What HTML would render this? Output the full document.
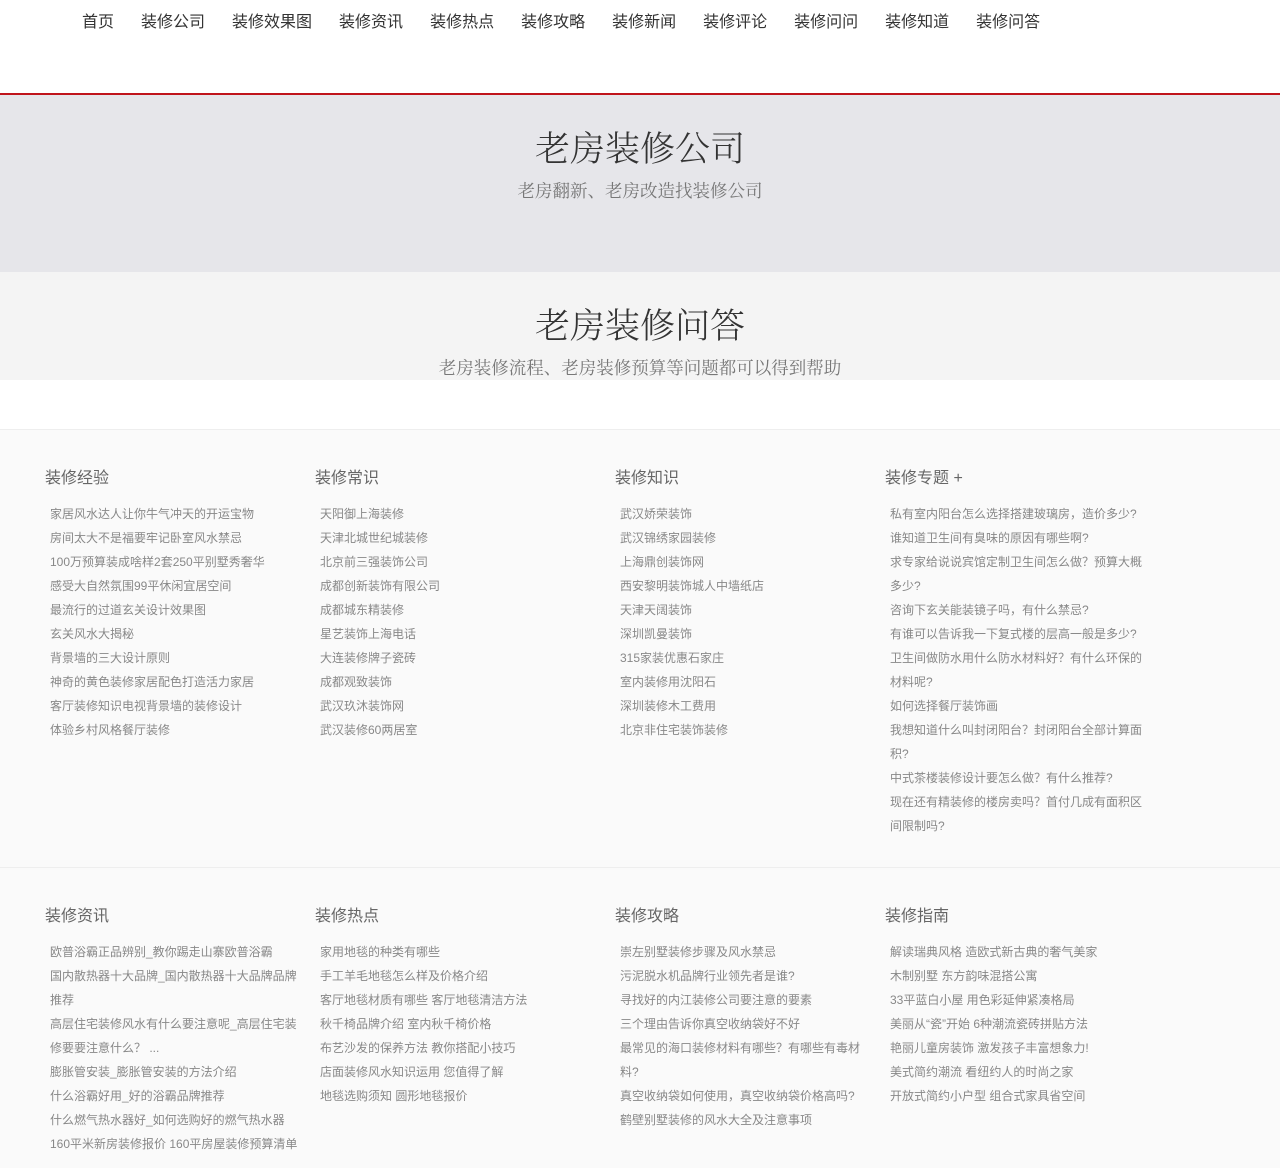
<!DOCTYPE html>
<html><head><meta charset="utf-8"><style>
*{margin:0;padding:0;box-sizing:border-box}
body{width:1280px;height:1167px;overflow:hidden;background:#fafafa;font-family:"Liberation Sans","Microsoft YaHei","Noto Sans CJK SC",sans-serif}
.top{background:#fff;height:95px;border-bottom:2px solid #c0141c;position:relative}
.nav{position:absolute;left:82px;top:8px;font-size:16px;color:#333;white-space:nowrap}
.nav span{margin-right:27px}
.b1{background:#e6e6ea;height:177px;text-align:center;font-family:"Noto Serif CJK SC",serif}
.b2{background:#f4f4f4;height:108px;text-align:center;font-family:"Noto Serif CJK SC",serif}
.t{font-size:35px;color:#333;line-height:40px;font-weight:300}
.s{font-size:17.5px;color:#777;line-height:24px}
.w{background:#fff;height:50px;border-bottom:1px solid #eee}
.sec{position:relative;height:438px;border-bottom:1px solid #eee}
.sec2{position:relative;height:300px}
.col{position:absolute;width:260px}
.col h3{font-weight:normal;font-size:16px;color:#666;height:36px;line-height:22px;padding-top:2px}
.col ul{list-style:none;padding-left:5px}
.col li{font-size:12px;line-height:24px;color:#888}
</style></head><body>
<div class="top"><div class="nav"><span>首页</span><span>装修公司</span><span>装修效果图</span><span>装修资讯</span><span>装修热点</span><span>装修攻略</span><span>装修新闻</span><span>装修评论</span><span>装修问问</span><span>装修知道</span><span>装修问答</span></div></div>
<div class="b1"><div style="height:32px"></div><div class="t">老房装修公司</div><div class="s" style="margin-top:12px">老房翻新、老房改造找装修公司</div></div>
<div class="b2"><div style="height:32px"></div><div class="t">老房装修问答</div><div class="s" style="margin-top:12px">老房装修流程、老房装修预算等问题都可以得到帮助</div></div>
<div class="w"></div>
<div class="sec">
<div class="col" style="left:45px;top:36px"><h3>装修经验</h3><ul><li>家居风水达人让你牛气冲天的开运宝物</li><li>房间太大不是福要牢记卧室风水禁忌</li><li>100万预算装成啥样2套250平别墅秀奢华</li><li>感受大自然氛围99平休闲宜居空间</li><li>最流行的过道玄关设计效果图</li><li>玄关风水大揭秘</li><li>背景墙的三大设计原则</li><li>神奇的黄色装修家居配色打造活力家居</li><li>客厅装修知识电视背景墙的装修设计</li><li>体验乡村风格餐厅装修</li></ul></div>
<div class="col" style="left:315px;top:36px"><h3>装修常识</h3><ul><li>天阳御上海装修</li><li>天津北城世纪城装修</li><li>北京前三强装饰公司</li><li>成都创新装饰有限公司</li><li>成都城东精装修</li><li>星艺装饰上海电话</li><li>大连装修牌子瓷砖</li><li>成都观致装饰</li><li>武汉玖沐装饰网</li><li>武汉装修60两居室</li></ul></div>
<div class="col" style="left:615px;top:36px"><h3>装修知识</h3><ul><li>武汉娇荣装饰</li><li>武汉锦绣家园装修</li><li>上海鼎创装饰网</li><li>西安黎明装饰城人中墙纸店</li><li>天津天阔装饰</li><li>深圳凯曼装饰</li><li>315家装优惠石家庄</li><li>室内装修用沈阳石</li><li>深圳装修木工费用</li><li>北京非住宅装饰装修</li></ul></div>
<div class="col" style="left:885px;top:36px;width:265px"><h3>装修专题 +</h3><ul><li>私有室内阳台怎么选择搭建玻璃房，造价多少?</li><li>谁知道卫生间有臭味的原因有哪些啊?</li><li>求专家给说说宾馆定制卫生间怎么做？预算大概多少?</li><li>咨询下玄关能装镜子吗，有什么禁忌?</li><li>有谁可以告诉我一下复式楼的层高一般是多少?</li><li>卫生间做防水用什么防水材料好？有什么环保的材料呢?</li><li>如何选择餐厅装饰画</li><li>我想知道什么叫封闭阳台？封闭阳台全部计算面积?</li><li>中式茶楼装修设计要怎么做？有什么推荐?</li><li>现在还有精装修的楼房卖吗？首付几成有面积区间限制吗?</li></ul></div>
</div>
<div class="sec2">
<div class="col" style="left:45px;top:36px"><h3>装修资讯</h3><ul><li>欧普浴霸正品辨别_教你踢走山寨欧普浴霸</li><li>国内散热器十大品牌_国内散热器十大品牌品牌推荐</li><li>高层住宅装修风水有什么要注意呢_高层住宅装修要要注意什么？ ...</li><li>膨胀管安装_膨胀管安装的方法介绍</li><li>什么浴霸好用_好的浴霸品牌推荐</li><li>什么燃气热水器好_如何选购好的燃气热水器</li><li>160平米新房装修报价 160平房屋装修预算清单</li></ul></div>
<div class="col" style="left:315px;top:36px"><h3>装修热点</h3><ul><li>家用地毯的种类有哪些</li><li>手工羊毛地毯怎么样及价格介绍</li><li>客厅地毯材质有哪些 客厅地毯清洁方法</li><li>秋千椅品牌介绍 室内秋千椅价格</li><li>布艺沙发的保养方法 教你搭配小技巧</li><li>店面装修风水知识运用 您值得了解</li><li>地毯选购须知 圆形地毯报价</li></ul></div>
<div class="col" style="left:615px;top:36px;width:250px"><h3>装修攻略</h3><ul><li>崇左别墅装修步骤及风水禁忌</li><li>污泥脱水机品牌行业领先者是谁?</li><li>寻找好的内江装修公司要注意的要素</li><li>三个理由告诉你真空收纳袋好不好</li><li>最常见的海口装修材料有哪些？有哪些有毒材料?</li><li>真空收纳袋如何使用，真空收纳袋价格高吗?</li><li>鹤壁别墅装修的风水大全及注意事项</li></ul></div>
<div class="col" style="left:885px;top:36px"><h3>装修指南</h3><ul><li>解读瑞典风格 造欧式新古典的奢气美家</li><li>木制别墅 东方韵味混搭公寓</li><li>33平蓝白小屋 用色彩延伸紧凑格局</li><li>美丽从“瓷”开始 6种潮流瓷砖拼贴方法</li><li>艳丽儿童房装饰 激发孩子丰富想象力!</li><li>美式简约潮流 看纽约人的时尚之家</li><li>开放式简约小户型 组合式家具省空间</li></ul></div>
</div>
</body></html>
